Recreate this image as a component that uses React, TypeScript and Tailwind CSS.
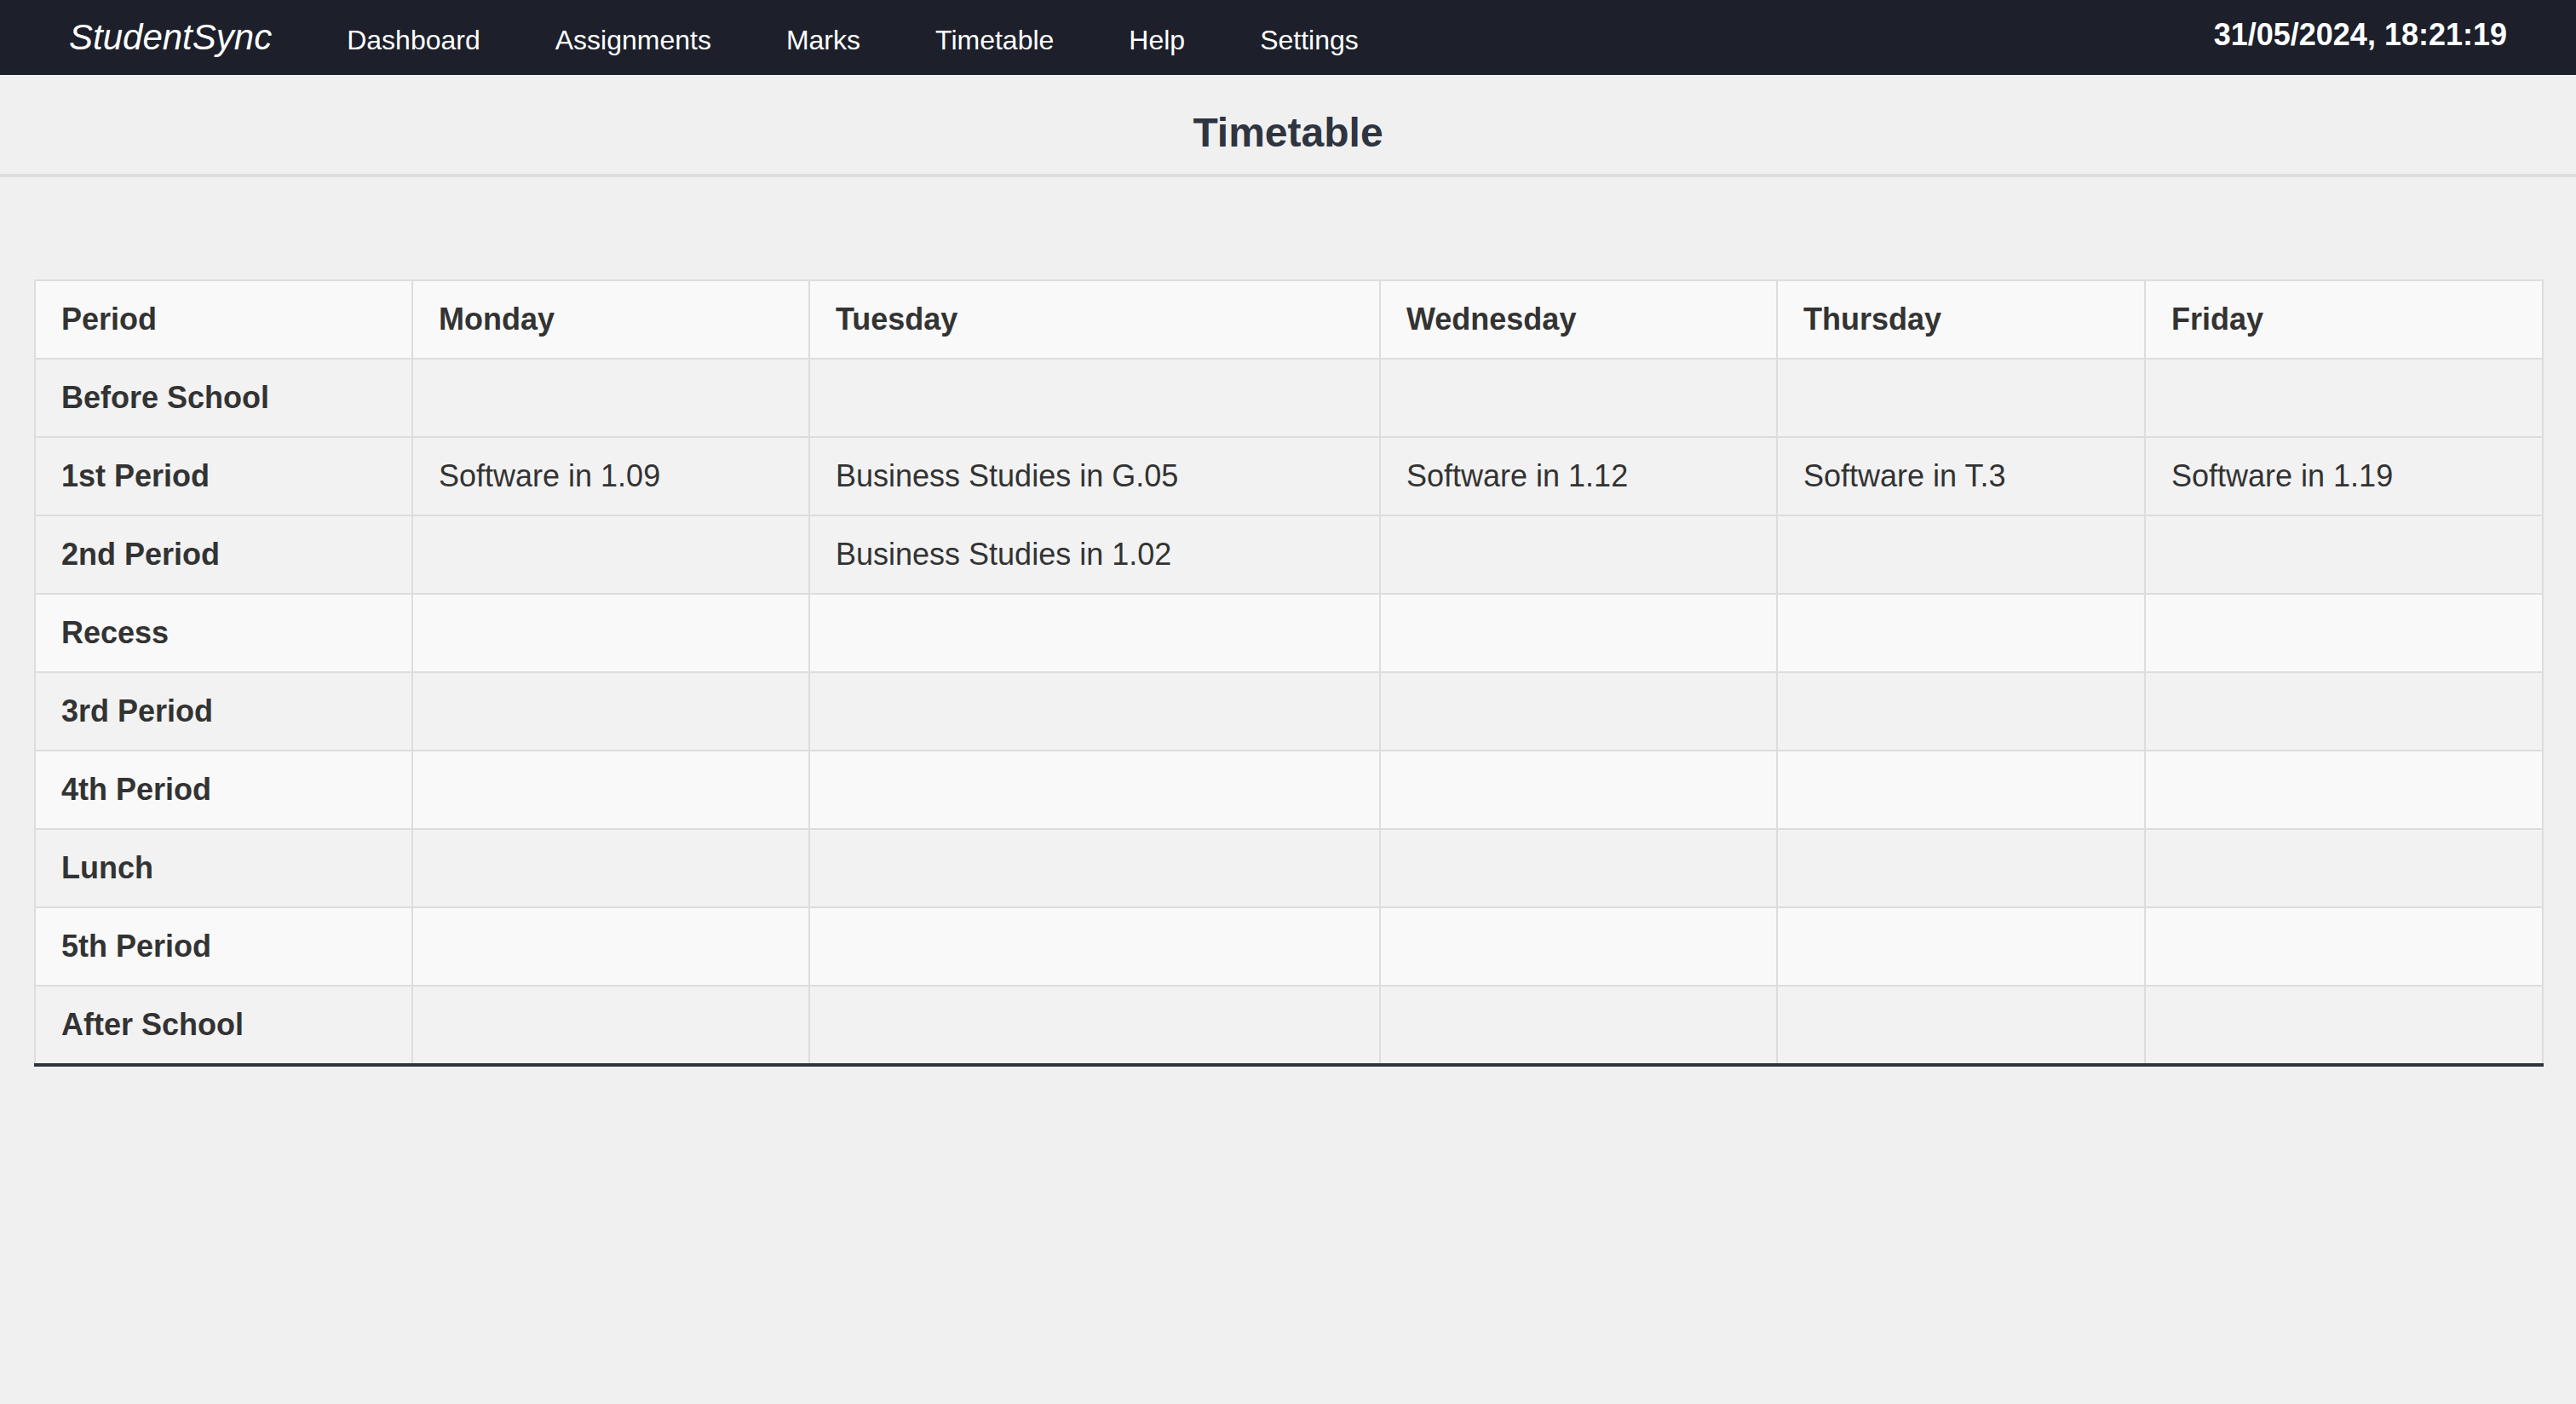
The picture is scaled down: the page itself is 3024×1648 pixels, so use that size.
const days = ['Monday', 'Tuesday', 'Wednesday', 'Thursday', 'Friday'];

const rows: { period: string; light: boolean; classes: string[] }[] = [
  { period: 'Before School', light: false, classes: ['', '', '', '', ''] },
  {
    period: '1st Period',
    light: false,
    classes: ['Software in 1.09', 'Business Studies in G.05', 'Software in 1.12', 'Software in T.3', 'Software in 1.19'],
  },
  { period: '2nd Period', light: false, classes: ['', 'Business Studies in 1.02', '', '', ''] },
  { period: 'Recess', light: true, classes: ['', '', '', '', ''] },
  { period: '3rd Period', light: false, classes: ['', '', '', '', ''] },
  { period: '4th Period', light: true, classes: ['', '', '', '', ''] },
  { period: 'Lunch', light: false, classes: ['', '', '', '', ''] },
  { period: '5th Period', light: true, classes: ['', '', '', '', ''] },
  { period: 'After School', light: false, classes: ['', '', '', '', ''] },
];

const navLinks = ['Dashboard', 'Assignments', 'Marks', 'Timetable', 'Help', 'Settings'];

export default function App() {
  return (
    <div className="min-h-screen bg-[#f0f0f0] font-['Liberation_Sans',Arial,sans-serif]">
      {/* Top bar */}
      <nav className="h-[88px] bg-[#1d202b] px-[81px] flex items-center justify-between text-white">
        <div className="flex items-center gap-[88px]">
          <span className="text-[42px] italic leading-[48px]">StudentSync</span>
          {navLinks.map((link) => (
            <a key={link} href="#" className="text-[32px] leading-[37px] mt-[6px]">
              {link}
            </a>
          ))}
        </div>
        <span className="text-[36px] leading-[41px] font-bold mb-[7px]">31/05/2024, 18:21:19</span>
      </nav>

      {/* Page title */}
      <header className="pt-[40px] pb-[21px] border-b-[4px] border-[#dcdcdc] text-center">
        <h1 className="text-[48px] leading-[55px] font-bold text-[#2e3440]">Timetable</h1>
      </header>

      {/* Timetable */}
      <div className="mx-[40px] mt-[120px]">
        <table className="w-full table-fixed border-collapse text-[36px] leading-[42px] text-[#333333] border-b-[4px] border-b-[#2e3440]">
          <colgroup>
            <col className="w-[443px]" />
            <col className="w-[466px]" />
            <col className="w-[670px]" />
            <col className="w-[466px]" />
            <col className="w-[432px]" />
            <col className="w-[467px]" />
          </colgroup>
          <thead>
            <tr className="bg-[#f9f9f9]">
              <th className="border-2 border-[#dddddd] px-[30px] py-[24px] text-left font-bold">Period</th>
              {days.map((day) => (
                <th key={day} className="border-2 border-[#dddddd] px-[30px] py-[24px] text-left font-bold">
                  {day}
                </th>
              ))}
            </tr>
          </thead>
          <tbody>
            {rows.map((row) => (
              <tr key={row.period} className={row.light ? 'bg-[#f9f9f9]' : 'bg-[#f2f2f2]'}>
                <td className="border-2 border-[#dddddd] px-[30px] py-[24px] font-bold">{row.period}</td>
                {row.classes.map((c, i) => (
                  <td key={i} className="border-2 border-[#dddddd] px-[30px] py-[24px]">
                    {c}
                  </td>
                ))}
              </tr>
            ))}
          </tbody>
        </table>
      </div>
    </div>
  );
}
